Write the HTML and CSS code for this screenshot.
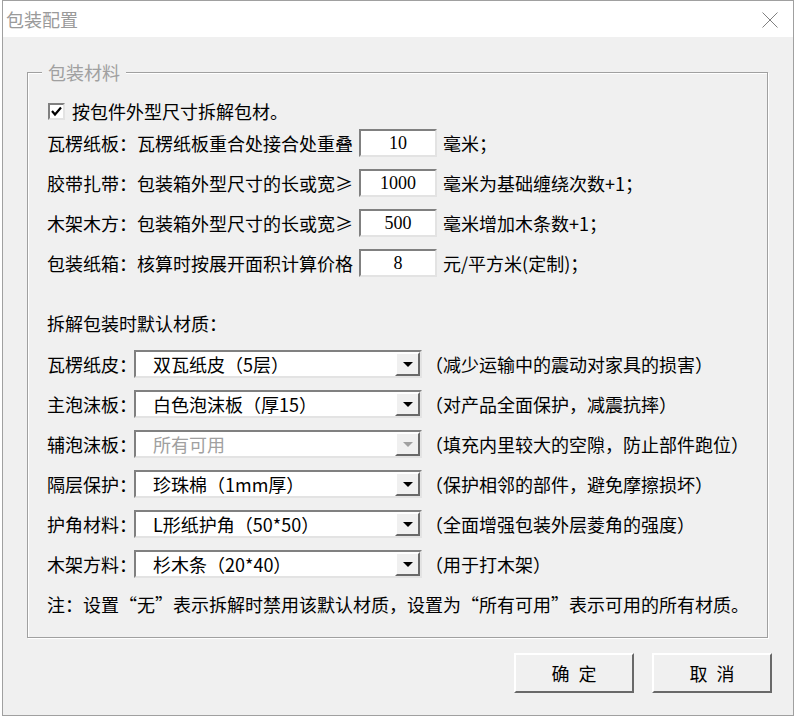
FILE: index.html
```html
<!DOCTYPE html>
<html lang="zh-CN">
<head>
<meta charset="utf-8">
<title>包装配置</title>
<link rel="stylesheet" href="styles.css">
</head>
<body>
<div class="dialog">
  <div class="titlebar">
    <span class="title">包装配置</span>
    <svg class="close" width="16" height="16" viewBox="0 0 16 16"><path d="M0.5 0.5 L15.5 15.5 M15.5 0.5 L0.5 15.5" stroke="#808080" stroke-width="1" fill="none"/></svg>
  </div>
  <div class="client">
    <div class="group">
      <span class="legend">包装材料</span>
      <div class="row check-row">
        <span class="checkbox"><svg width="11" height="11" viewBox="0 0 11 11"><path d="M1 5 L4 8.5 L10 1.5" stroke="#000" stroke-width="2.2" fill="none"/></svg></span>
        <span class="check-text">按包件外型尺寸拆解包材。</span>
      </div>
      <div class="row param">
        <span class="plabel">瓦楞纸板：瓦楞纸板重合处接合处重叠</span><span class="input">10</span><span class="unit">毫米；</span>
      </div>
      <div class="row param">
        <span class="plabel">胶带扎带：包装箱外型尺寸的长或宽≥</span><span class="input">1000</span><span class="unit">毫米为基础缠绕次数+1；</span>
      </div>
      <div class="row param">
        <span class="plabel">木架木方：包装箱外型尺寸的长或宽≥</span><span class="input">500</span><span class="unit">毫米增加木条数+1；</span>
      </div>
      <div class="row param last-param">
        <span class="plabel">包装纸箱：核算时按展开面积计算价格</span><span class="input">8</span><span class="unit">元/平方米(定制)；</span>
      </div>
      <div class="row section">拆解包装时默认材质：</div>
      <div class="row combo-row">
        <span class="clabel">瓦楞纸皮：</span>
        <span class="combo"><span class="cval">双瓦纸皮（5层）</span><span class="dd"><i class="tri"></i></span></span>
        <span class="desc">（减少运输中的震动对家具的损害）</span>
      </div>
      <div class="row combo-row">
        <span class="clabel">主泡沫板：</span>
        <span class="combo"><span class="cval">白色泡沫板（厚15）</span><span class="dd"><i class="tri"></i></span></span>
        <span class="desc">（对产品全面保护，减震抗摔）</span>
      </div>
      <div class="row combo-row">
        <span class="clabel">辅泡沫板：</span>
        <span class="combo disabled"><span class="cval">所有可用</span><span class="dd"><i class="tri"></i></span></span>
        <span class="desc">（填充内里较大的空隙，防止部件跑位）</span>
      </div>
      <div class="row combo-row">
        <span class="clabel">隔层保护：</span>
        <span class="combo"><span class="cval">珍珠棉（1mm厚）</span><span class="dd"><i class="tri"></i></span></span>
        <span class="desc">（保护相邻的部件，避免摩擦损坏）</span>
      </div>
      <div class="row combo-row">
        <span class="clabel">护角材料：</span>
        <span class="combo"><span class="cval">L形纸护角（50*50）</span><span class="dd"><i class="tri"></i></span></span>
        <span class="desc">（全面增强包装外层菱角的强度）</span>
      </div>
      <div class="row combo-row">
        <span class="clabel">木架方料：</span>
        <span class="combo"><span class="cval">杉木条（20*40）</span><span class="dd"><i class="tri"></i></span></span>
        <span class="desc">（用于打木架）</span>
      </div>
      <div class="row note">注：设置“无”表示拆解时禁用该默认材质，设置为“所有可用”表示可用的所有材质。</div>
    </div>
    <div class="buttons">
      <button class="btn">确 定</button>
      <button class="btn">取 消</button>
    </div>
  </div>
</div>
</body>
</html>
```
FILE: styles.css
```css
html, body {
  margin: 0;
  padding: 0;
  background: #ffffff;
}
body {
  font-family: "Noto Sans CJK SC", "Noto Sans", sans-serif;
  font-size: 18px;
  color: #000;
}
.dialog {
  box-sizing: border-box;
  margin-left: 2px;
  width: 792px;
  height: 716px;
  border: 1px solid #a0a0a0;
  display: flex;
  flex-direction: column;
}
.titlebar {
  height: 36px;
  flex: none;
  background: #fff;
  display: flex;
  align-items: center;
  justify-content: space-between;
}
.title {
  padding-left: 3px;
  color: #9a9a9a;
  font-size: 18px;
  line-height: 20px;
  margin-top: -1px;
}
.close {
  margin-right: 15px;
  margin-top: 1px;
}
.client {
  flex: 1;
  background: #f0f0f0;
  padding-top: 35px;
  padding-left: 24px;
}
.group {
  position: relative;
  box-sizing: border-box;
  width: 741px;
  height: 566px;
  border: 1px solid #a0a0a0;
  box-shadow: 1px 1px 0 #fff, inset 1px 1px 0 #fff;
  padding: 24px 0 0 19px;
}
.legend {
  position: absolute;
  left: 14px;
  top: -11px;
  padding: 0 6px;
  background: #f0f0f0;
  color: #a0a0a0;
  line-height: 20px;
}
.row {
  display: flex;
  align-items: center;
  height: 28px;
  line-height: 28px;
  white-space: nowrap;
}
.check-row {
  margin-bottom: 4px;
}
.checkbox {
  box-sizing: border-box;
  width: 17px;
  height: 17px;
  margin-left: 1px;
  margin-right: 7px;
  background: #fff;
  border: 2px solid;
  border-color: #808080 #e3e3e3 #e3e3e3 #808080;
  display: flex;
  align-items: center;
  justify-content: center;
}
.checkbox svg {
  display: block;
}
.param {
  margin-bottom: 12px;
}
.plabel {
  width: 312px;
}
.input {
  box-sizing: border-box;
  width: 78px;
  height: 28px;
  background: #fff;
  border: 2px solid;
  border-color: #808080 #e3e3e3 #e3e3e3 #808080;
  text-align: center;
  font-family: "Liberation Serif", serif;
  font-size: 18px;
  line-height: 24px;
}
.unit {
  margin-left: 6px;
}
.section {
  margin-top: 32px;
  margin-bottom: 13px;
}
.combo-row {
  margin-bottom: 12px;
}
.clabel {
  width: 87px;
}
.combo {
  box-sizing: border-box;
  width: 288px;
  height: 28px;
  background: #fff;
  border: 2px solid;
  border-color: #808080 #e3e3e3 #e3e3e3 #808080;
  display: flex;
  align-items: center;
}
.cval {
  flex: 1;
  padding-left: 17px;
  line-height: 24px;
}
.dd {
  box-sizing: border-box;
  width: 25px;
  height: 24px;
  background: #f0f0f0;
  border: 2px solid;
  border-color: #fff #696969 #696969 #fff;
  display: flex;
  align-items: center;
  justify-content: center;
}
.tri {
  display: block;
  width: 0;
  height: 0;
  border-left: 5.5px solid transparent;
  border-right: 5.5px solid transparent;
  border-top: 5px solid #000;
}
.combo.disabled .cval {
  color: #a0a0a0;
}
.combo.disabled .tri {
  border-top-color: #a0a0a0;
}
.desc {
  margin-left: 3px;
}
.buttons {
  display: flex;
  justify-content: flex-end;
  gap: 18px;
  padding-right: 21px;
  margin-top: 15px;
}
.btn {
  box-sizing: border-box;
  width: 120px;
  height: 40px;
  background: #f0f0f0;
  border: 2px solid;
  border-color: #fff #696969 #696969 #fff;
  font-family: "Noto Sans CJK SC", sans-serif;
  font-size: 18px;
  color: #000;
  word-spacing: 5px;
  padding: 0;
}
```
